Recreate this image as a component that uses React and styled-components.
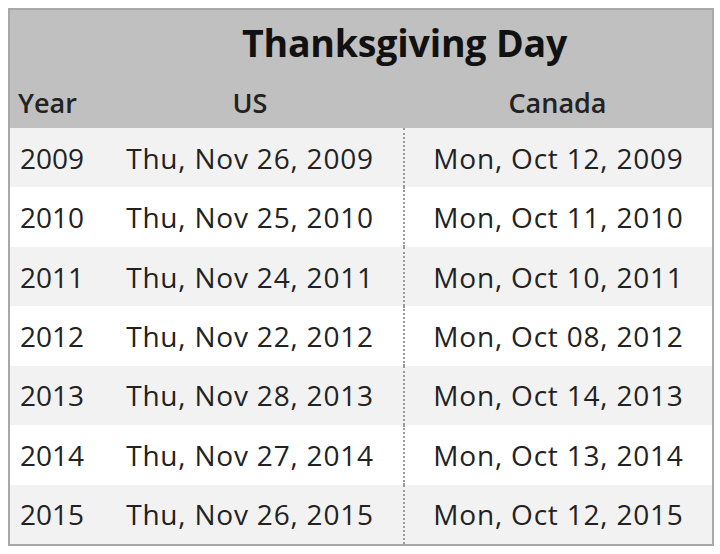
import React from "react";
import styled, { createGlobalStyle } from "styled-components";

const Global = createGlobalStyle`
  html, body { margin: 0; padding: 0; background: #ffffff; }
  body { font-family: "Open Sans", "Noto Sans", sans-serif; }
`;

const Page = styled.div`
  width: 720px;
  height: 554px;
  padding: 8px 0 0 8px;
  box-sizing: border-box;
`;

const Table = styled.div`
  width: 706px;
  box-sizing: border-box;
  border: 2px solid #a8a8a8;
  display: grid;
  grid-template-columns: 87px 306px 1fr;
  grid-template-rows: 66px 52px repeat(7, 59.43px);
  color: #1c1c1c;
`;

const HeadCell = styled.div`
  background: #c0c0c0;
  display: flex;
  align-items: center;
  justify-content: ${(p) => (p.$left ? "flex-start" : "center")};
  padding-left: ${(p) => (p.$left ? "8px" : "0")};
  grid-column: ${(p) => p.$span || "auto"};
  font-size: ${(p) => (p.$title ? "37.5px" : "27px")};
  font-weight: ${(p) => (p.$title ? 700 : 600)};
  letter-spacing: ${(p) => (p.$title ? "-0.2px" : "0")};
  color: ${(p) => (p.$title ? "#111" : "#222")};
  padding-bottom: ${(p) => (p.$title ? "2px" : "0")};
`;

const Cell = styled.div`
  background: ${(p) => (p.$alt ? "#f2f2f2" : "#ffffff")};
  display: flex;
  align-items: center;
  justify-content: ${(p) => (p.$left ? "flex-start" : "center")};
  padding-left: ${(p) => (p.$left ? "10px" : "0")};
  font-size: 28px;
  letter-spacing: ${(p) => (p.$left ? "0" : "0.8px")};
  border-left: ${(p) => (p.$divider ? "2px dotted #9a9a9a" : "none")};
  color: #222;
`;

const rows = [
  ["2009", "Thu, Nov 26, 2009", "Mon, Oct 12, 2009"],
  ["2010", "Thu, Nov 25, 2010", "Mon, Oct 11, 2010"],
  ["2011", "Thu, Nov 24, 2011", "Mon, Oct 10, 2011"],
  ["2012", "Thu, Nov 22, 2012", "Mon, Oct 08, 2012"],
  ["2013", "Thu, Nov 28, 2013", "Mon, Oct 14, 2013"],
  ["2014", "Thu, Nov 27, 2014", "Mon, Oct 13, 2014"],
  ["2015", "Thu, Nov 26, 2015", "Mon, Oct 12, 2015"],
];

export default function App() {
  return (
    <Page>
      <Global />
      <Table>
        <HeadCell />
        <HeadCell $title $span="2 / 4">Thanksgiving Day</HeadCell>
        <HeadCell $left>Year</HeadCell>
        <HeadCell>US</HeadCell>
        <HeadCell>Canada</HeadCell>
        {rows.map((r, i) => (
          <React.Fragment key={r[0]}>
            <Cell $alt={i % 2 === 0} $left>{r[0]}</Cell>
            <Cell $alt={i % 2 === 0}>{r[1]}</Cell>
            <Cell $alt={i % 2 === 0} $divider>{r[2]}</Cell>
          </React.Fragment>
        ))}
      </Table>
    </Page>
  );
}
